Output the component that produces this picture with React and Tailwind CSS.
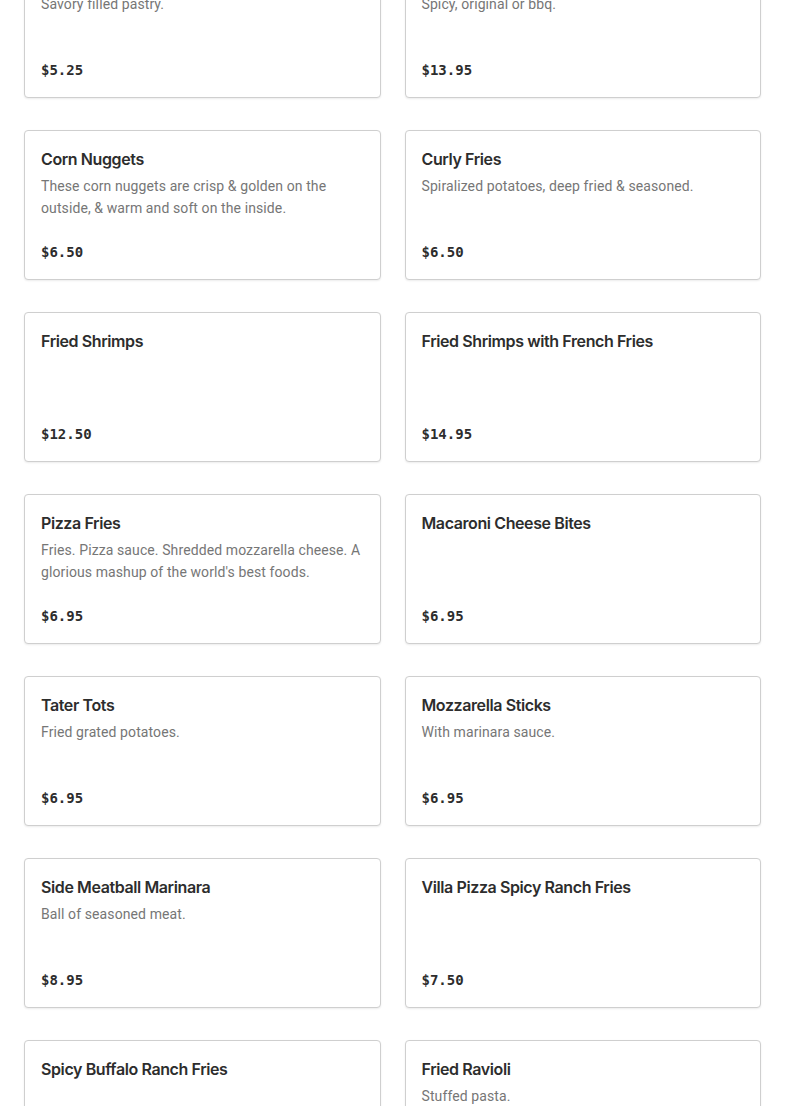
const items = [
  { name: "Beef Patty", desc: "Savory filled pastry.", price: "$5.25" },
  { name: "Chicken Wings", desc: "Spicy, original or bbq.", price: "$13.95" },
  { name: "Corn Nuggets", desc: "These corn nuggets are crisp & golden on the outside, & warm and soft on the inside.", price: "$6.50" },
  { name: "Curly Fries", desc: "Spiralized potatoes, deep fried & seasoned.", price: "$6.50" },
  { name: "Fried Shrimps", desc: "", price: "$12.50" },
  { name: "Fried Shrimps with French Fries", desc: "", price: "$14.95" },
  { name: "Pizza Fries", desc: "Fries. Pizza sauce. Shredded mozzarella cheese. A glorious mashup of the world's best foods.", price: "$6.95" },
  { name: "Macaroni Cheese Bites", desc: "", price: "$6.95" },
  { name: "Tater Tots", desc: "Fried grated potatoes.", price: "$6.95" },
  { name: "Mozzarella Sticks", desc: "With marinara sauce.", price: "$6.95" },
  { name: "Side Meatball Marinara", desc: "Ball of seasoned meat.", price: "$8.95" },
  { name: "Villa Pizza Spicy Ranch Fries", desc: "", price: "$7.50" },
  { name: "Spicy Buffalo Ranch Fries", desc: "", price: "$7.50" },
  { name: "Fried Ravioli", desc: "Stuffed pasta.", price: "$6.95" },
];

const MenuCard = ({ item }) => (
  <div className="flex h-[150px] flex-col rounded-[4px] border border-[#cfcfcf] bg-white px-4 pt-4 pb-4 shadow-[0_1px_2px_rgba(0,0,0,0.08)]">
    <h3 className="text-[16px] leading-6 font-semibold text-[#2d2d2d] font-['Inter',sans-serif] tracking-[-0.4px]">
      {item.name}
    </h3>
    {item.desc && (
      <p className="mt-1 text-[14px] leading-[22px] text-[#767676] font-['Roboto',sans-serif] tracking-[0.1px]">
        {item.desc}
      </p>
    )}
    <div className="mt-auto text-[14px] leading-[22px] font-bold text-[#2d2d2d] font-['DejaVu_Sans_Mono',monospace]">
      {item.price}
    </div>
  </div>
);

export default function App() {
  return (
    <div className="h-[1106px] overflow-hidden bg-white">
      <div className="-mt-[52px] grid grid-cols-2 gap-x-6 gap-y-8 px-6">
        {items.map((item) => (
          <MenuCard key={item.name} item={item} />
        ))}
      </div>
    </div>
  );
}
